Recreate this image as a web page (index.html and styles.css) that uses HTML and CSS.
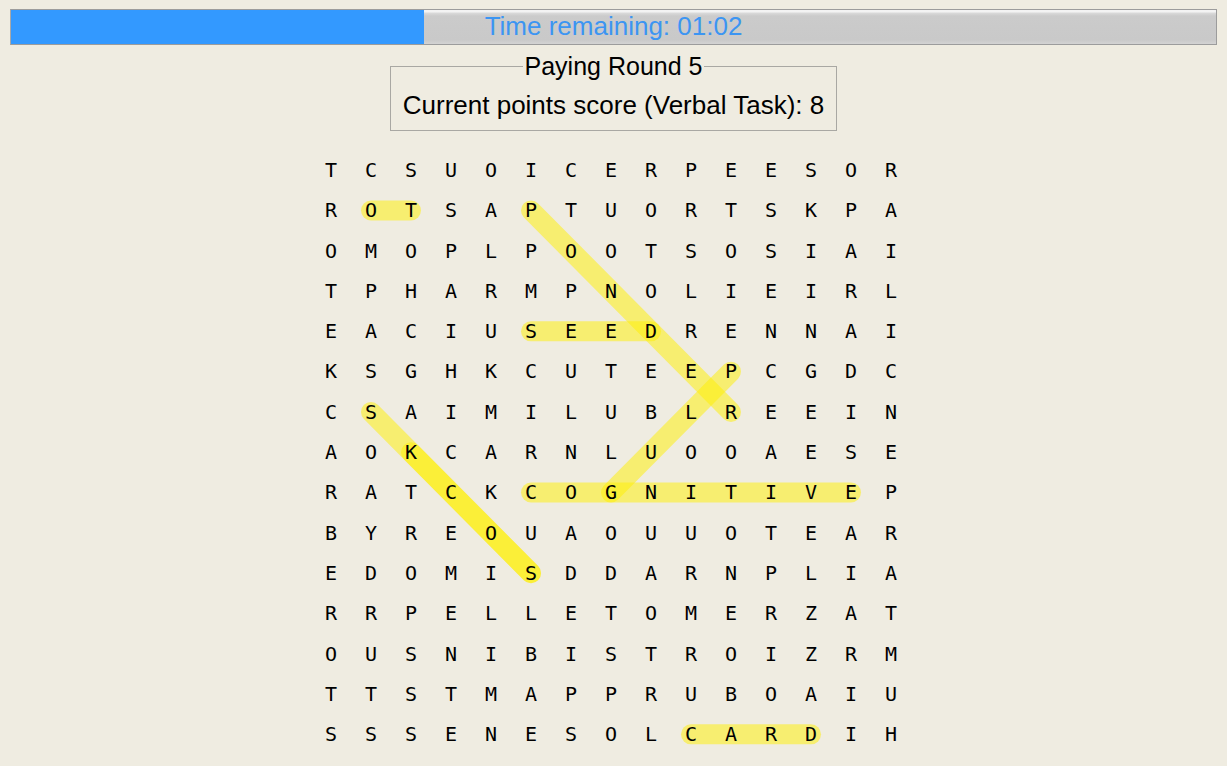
FILE: index.html
```html
<!DOCTYPE html>
<html>
<head>
<meta charset="utf-8">
<link rel="stylesheet" href="styles.css">
</head>
<body>
<div class="progress">
  <div class="progress-fill" style="width: 34.3%"></div>
  <div class="progress-label">Time remaining: 01:02</div>
</div>
<div class="center">
  <fieldset class="group">
    <legend class="group-title">Paying Round 5</legend>
    <div class="group-text">Current points score (Verbal Task): 8</div>
  </fieldset>
</div>
<div class="board-wrap">
  <div class="board">
    <svg class="marks" viewBox="0 0 600 604.5" width="600" height="604.5">
      <g stroke="rgb(255,240,0)" stroke-opacity="0.5" stroke-width="20" stroke-linecap="round" fill="none">
        <line x1="60" y1="60.45" x2="100" y2="60.45"/>
        <line x1="220" y1="60.45" x2="420" y2="261.95"/>
        <line x1="220" y1="181.35" x2="340" y2="181.35"/>
        <line x1="420" y1="221.65" x2="300" y2="342.55"/>
        <line x1="220" y1="342.55" x2="540" y2="342.55"/>
        <line x1="60" y1="261.95" x2="220" y2="423.15"/>
        <line x1="100" y1="302.25" x2="220" y2="423.15"/>
        <line x1="380" y1="584.35" x2="500" y2="584.35"/>
      </g>
    </svg>
    <div class="letters" id="letters"></div>
  </div>
</div>
<script src="script.js"></script>
</body>
</html>
```
FILE: script.js
```js
var rows = [
  "TCSUOICERPEESOR",
  "ROTSAPTUORTSKPA",
  "OMOPLPOOTSOSIAI",
  "TPHARMPNOLIEIRL",
  "EACIUSEEDRENNAI",
  "KSGHKCUTEEPCGDC",
  "CSAIMILUBLREEIN",
  "AOKCARNLUOOAESE",
  "RATCKCOGNITIVEP",
  "BYREOUAOUUOTEAR",
  "EDOMISDDARNPLIA",
  "RRPELLETOMERZAT",
  "OUSNIBISTROIZRM",
  "TTSTMAPPRUBOAIU",
  "SSSENESOLCARDIH"
];
var box = document.getElementById("letters");
rows.forEach(function (r) {
  for (var i = 0; i < r.length; i++) {
    var c = document.createElement("span");
    c.className = "cell";
    c.textContent = r[i];
    box.appendChild(c);
  }
});
```
FILE: styles.css
```css
html, body {
  margin: 0;
  padding: 0;
}
body {
  background: #efece1;
  padding: 9px 10px 0;
  font-family: "Liberation Sans", Arial, sans-serif;
  color: #000;
}
.progress {
  position: relative;
  height: 36px;
  box-sizing: border-box;
  border: 1px solid #9c9c9c;
  border-left-color: #a8a8a8;
  background: linear-gradient(#f3f3f3 0, #f3f3f3 2px, #dadada 3px, #cbcbcb 6px, #c9c9c9 calc(100% - 4px), #d3d3d3 100%);
  overflow: hidden;
}
.progress-fill {
  height: 100%;
  background: #3399ff;
}
.progress-label {
  position: absolute;
  inset: 0;
  display: flex;
  align-items: center;
  justify-content: center;
  font-size: 26px;
  color: #3c95f2;
  padding-bottom: 1px;
}
.center {
  display: flex;
  justify-content: center;
  margin-top: 7px;
}
.group {
  margin: 0;
  padding: 0 12px 10px;
  border: 1px solid #a9a8a3;
  min-width: 0;
}
.group-title {
  margin: 0 auto;
  padding: 0 2px;
  font-size: 25px;
  line-height: 28px;
}
.group-text {
  font-size: 26px;
  line-height: 30px;
  margin-top: 10px;
}
.board-wrap {
  display: flex;
  justify-content: center;
  margin-top: 19px;
  padding-right: 5px;
}
.board {
  position: relative;
  width: 600px;
  height: 604.5px;
}
.marks {
  position: absolute;
  left: 0;
  top: 0;
}
.letters {
  position: relative;
  display: grid;
  grid-template-columns: repeat(15, 40px);
  grid-template-rows: repeat(15, 40.3px);
}
.cell {
  display: flex;
  align-items: center;
  justify-content: center;
  font-family: "DejaVu Sans Mono", monospace;
  font-size: 20px;
  line-height: 40.3px;
}
```
